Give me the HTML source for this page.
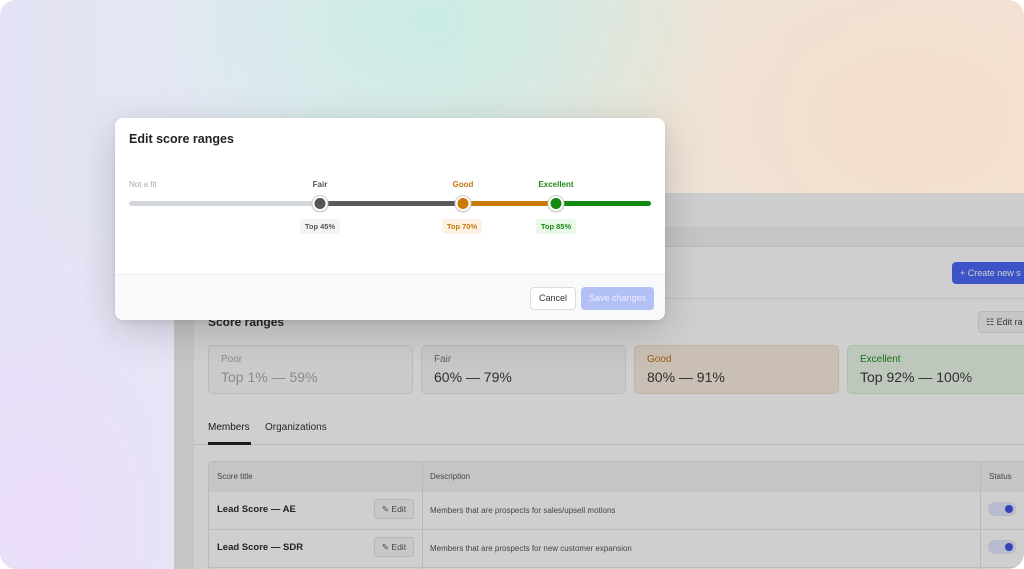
<!DOCTYPE html>
<html><head><meta charset="utf-8"><style>
*{box-sizing:border-box;margin:0;padding:0}
html,body{width:1024px;height:569px;overflow:hidden;background:#fff;font-family:"Liberation Sans",sans-serif}
.frame{position:absolute;left:0;top:0;width:1024px;height:569px;border-radius:16px;overflow:hidden;
background:
radial-gradient(ellipse 420px 300px at 430px 20px,rgba(200,236,228,0.95),rgba(200,236,228,0) 70%),
radial-gradient(ellipse 500px 350px at 900px 120px,rgba(244,222,204,1),rgba(244,222,204,0) 75%),
radial-gradient(ellipse 300px 400px at 40px 520px,rgba(236,222,250,1),rgba(236,222,250,0) 80%),
linear-gradient(90deg,#e3e3f5 0%,#e6eaf2 30%,#e9e6dc 60%,#f1e3d8 100%);}
.app{position:absolute;left:174px;top:193px;width:860px;height:380px;background:#ffffff}
.side{position:absolute;left:0;top:0;width:20px;height:100%;background:#f3f3f3}
.topb{position:absolute;left:20px;top:0;right:0;height:34px;background:#fdfdfd}
.band{position:absolute;left:20px;top:34px;right:0;height:20px;background:#f3f3f4;border-bottom:1px solid #eaeaea}
.abs{position:absolute}
.card{position:absolute;top:345px;width:205px;height:49px;border:1px solid #e6e6e6;border-radius:5px;background:#fbfbfb;padding:8px 12px}
.card .l{font-size:10px;margin-bottom:4px}
.card .v{font-size:14px;color:#3a3a3a}
.dim{position:absolute;left:174px;top:193px;width:860px;height:380px;background:rgba(0,0,0,0.19)}
.modal{position:absolute;left:115px;top:118px;width:550px;height:202px;background:#fff;border-radius:8px;overflow:hidden;box-shadow:0 10px 40px rgba(0,0,0,0.18),0 2px 6px rgba(0,0,0,0.08)}
.foot{position:absolute;left:0;top:156px;width:100%;height:46px;background:#f8f9fa;border-top:1px solid #eceef0}
.lbl{position:absolute;top:62px;font-size:8px;font-weight:bold;transform:translateX(-50%)}
.badge{position:absolute;top:101px;font-size:7.5px;font-weight:bold;padding:3px 5px;border-radius:3px;transform:translateX(-50%)}
.thumb{position:absolute;top:78px;width:15px;height:15px;border-radius:50%;border:2px solid #fff;box-shadow:0 0 0 1px #ccc,0 1px 2px rgba(0,0,0,.3);transform:translateX(-50%)}
.seg{position:absolute;top:83px;height:5px}
.ebtn{position:absolute;left:374px;width:40px;height:20px;border:1px solid #e2e2e2;border-radius:3px;background:#f6f6f6;font-size:8.5px;color:#555;text-align:center;line-height:18px}
.tog{position:absolute;left:988px;width:28px;height:14px;border-radius:7px;background:#e3e7fb}
.tog::after{content:"";position:absolute;right:3px;top:3px;width:8px;height:8px;border-radius:50%;background:#3a55e0}
</style></head><body>
<div class="frame">
<div class="app"><div class="side"></div><div class="topb"></div><div class="band"></div></div>
<div class="abs" style="left:194px;top:298px;width:830px;border-top:1px solid #ededed"></div>
<div class="abs" style="left:952px;top:262px;width:80px;height:22px;background:#4a68f5;border-radius:4px;color:#fff;font-size:9px;line-height:22px;padding-left:8px">+ Create new s</div>
<div class="abs" style="left:208px;top:315px;font-size:12px;font-weight:bold;color:#333">Score ranges</div>
<div class="abs" style="left:978px;top:311px;width:60px;height:22px;background:#f4f4f4;border:1px solid #e2e2e2;border-radius:4px;font-size:9px;line-height:20px;padding-left:7px;color:#444">☷ Edit ra</div>
<div class="card" style="left:208px"><div class="l" style="color:#aaa">Poor</div><div class="v" style="color:#aaa">Top 1% — 59%</div></div>
<div class="card" style="left:421px;background:#f4f5f7"><div class="l" style="color:#777">Fair</div><div class="v">60% — 79%</div></div>
<div class="card" style="left:634px;background:#f8ecde;border-color:#f0dcc4"><div class="l" style="color:#b87410">Good</div><div class="v">80% — 91%</div></div>
<div class="card" style="left:847px;width:200px;background:#eaf6e8;border-color:#d6ecd4"><div class="l" style="color:#1e8a1e">Excellent</div><div class="v">Top 92% — 100%</div></div>
<div class="abs" style="left:208px;top:422px;font-size:10px;color:#222">Members</div>
<div class="abs" style="left:265px;top:422px;font-size:10px;color:#333">Organizations</div>
<div class="abs" style="left:194px;top:444px;width:830px;border-top:1px solid #e4e4e4"></div>
<div class="abs" style="left:208px;top:442px;width:43px;height:3px;background:#222"></div>
<div class="abs" style="left:208px;top:461px;width:830px;height:120px;border:1px solid #e4e4e4;border-radius:5px;overflow:hidden">
 <div class="abs" style="left:0;top:0;width:100%;height:30px;background:#f3f3f4"></div>
 <div class="abs" style="left:213px;top:0;height:120px;border-left:1px solid #e4e4e4"></div>
 <div class="abs" style="left:771px;top:0;height:120px;border-left:1px solid #e4e4e4"></div>
 <div class="abs" style="left:0;top:67px;width:100%;border-top:1px solid #e8e8e8"></div>
 <div class="abs" style="left:0;top:105px;width:100%;border-top:1px solid #e8e8e8"></div>
</div>
<div class="abs" style="left:217px;top:472px;font-size:8px;color:#555">Score title</div>
<div class="abs" style="left:430px;top:472px;font-size:8px;color:#555">Description</div>
<div class="abs" style="left:989px;top:472px;font-size:8px;color:#555">Status</div>
<div class="abs" style="left:217px;top:504px;font-size:9.5px;font-weight:bold;color:#2a2a2a">Lead Score — AE</div>
<div class="abs" style="left:217px;top:542px;font-size:9.5px;font-weight:bold;color:#2a2a2a">Lead Score — SDR</div>
<div class="ebtn" style="top:499px">✎ Edit</div>
<div class="ebtn" style="top:537px">✎ Edit</div>
<div class="abs" style="left:430px;top:506px;font-size:8px;color:#555">Members that are prospects for sales/upsell motions</div>
<div class="abs" style="left:430px;top:544px;font-size:8px;color:#555">Members that are prospects for new customer expansion</div>
<div class="tog" style="top:502px"></div>
<div class="tog" style="top:540px"></div>
<div class="dim"></div>

<div class="modal">
 <div class="abs" style="left:14px;top:14px;font-size:12.5px;font-weight:bold;color:#222">Edit score ranges</div>
 <div class="abs" style="left:14px;top:62px;font-size:8px;color:#aaa">Not a fit</div>
 <div class="lbl" style="left:205px;color:#555">Fair</div>
 <div class="lbl" style="left:348px;color:#c27a0e">Good</div>
 <div class="lbl" style="left:441px;color:#1e8a1e">Excellent</div>
 <div class="seg" style="left:14px;width:192px;background:#d3d6da;border-radius:3px 0 0 3px"></div>
 <div class="seg" style="left:205px;width:144px;background:#5a5a5a"></div>
 <div class="seg" style="left:348px;width:94px;background:#c97a05"></div>
 <div class="seg" style="left:441px;width:95px;background:#118a11;border-radius:0 3px 3px 0"></div>
 <div class="thumb" style="left:205px;background:#555"></div>
 <div class="thumb" style="left:348px;background:#c97a05"></div>
 <div class="thumb" style="left:441px;background:#118a11"></div>
 <div class="badge" style="left:205px;background:#f4f4f5;color:#555">Top 45%</div>
 <div class="badge" style="left:347px;background:#fdf1e4;color:#c27a0e">Top 70%</div>
 <div class="badge" style="left:441px;background:#eaf8ea;color:#1e8a1e">Top 85%</div>
 <div class="foot">
  <div class="abs" style="left:415px;top:12px;width:46px;height:23px;background:#fff;border:1px solid #dcdcdc;border-radius:4px;font-size:9px;color:#333;text-align:center;line-height:21px">Cancel</div>
  <div class="abs" style="left:466px;top:12px;width:73px;height:23px;background:#b3c0f6;border-radius:4px;font-size:9px;color:#eef;text-align:center;line-height:23px">Save changes</div>
 </div>
</div>
</div>
</body></html>
